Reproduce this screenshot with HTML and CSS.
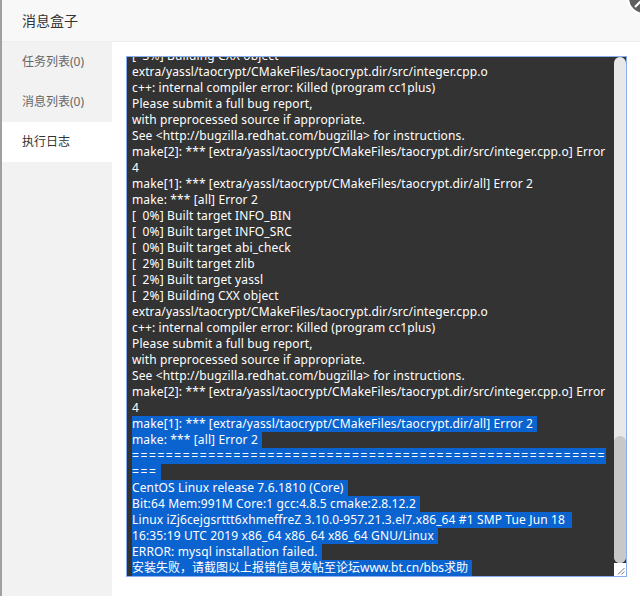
FILE: index.html
```html
<!DOCTYPE html>
<html lang="zh-CN">

<head>
    <meta charset="UTF-8">
    <meta name="viewport" content="width=device-width, initial-scale=1.0">
    <title>消息盒子</title>
    <link rel="stylesheet" href="styles.css">
</head>

<body>
    <div class="layer">
        <div class="layer-title">消息盒子</div>
        <!-- 关闭按钮（圆形，露出一角） -->
        <span class="layer-close">
            <svg viewBox="0 0 34 34" width="34" height="34">
                <circle cx="17" cy="17" r="17" fill="#fff" />
                <circle cx="17" cy="17" r="15" fill="#5f5f5f" />
                <path d="M8 8L26 26M26 8L8 26" stroke="#fff" stroke-width="2.2" />
            </svg>
        </span>
        <div class="layer-body">
            <ul class="tab-nav">
                <li>任务列表(0)</li>
                <li>消息列表(0)</li>
                <li class="on">执行日志</li>
            </ul>
            <div class="tab-con">
                <div class="logbox">
                    <!-- column-reverse: 日志默认显示最底部 -->
                    <div class="logscroll">
                        <div class="log">|-Start installing mysql-5.6 ...
--2019-06-20 10:12:04--  http://download.bt.cn/src/mysql-5.6.44.tar.gz
正在解析主机 download.bt.cn... 
正在连接 download.bt.cn:80... 已连接。
已发出 HTTP 请求，正在等待回应... 200 OK
长度：32094542 (31M) [application/octet-stream]
正在保存至: “mysql-5.6.44.tar.gz”
2019-06-20 10:12:09 (6.48 MB/s) - 已保存 “mysql-5.6.44.tar.gz”
-- Running cmake version 2.8.12.2
-- Could NOT find Git (missing:  GIT_EXECUTABLE)
-- Configuring with MAX_INDEXES = 64U
-- The C compiler identification is GNU 4.8.5
-- The CXX compiler identification is GNU 4.8.5
-- Check for working C compiler: /usr/bin/cc
-- Check for working C compiler: /usr/bin/cc -- works
-- Detecting C compiler ABI info
-- Detecting C compiler ABI info - done
-- Check for working CXX compiler: /usr/bin/c++
-- Check for working CXX compiler: /usr/bin/c++ -- works
-- Detecting CXX compiler ABI info
-- Detecting CXX compiler ABI info - done
-- CMAKE_GENERATOR: Unix Makefiles
-- SIZEOF_VOIDP 8
-- MySQL 5.6.44
-- Packaging as: mysql-5.6.44-Linux-x86_64
-- Looking for SHM_HUGETLB
-- Looking for SHM_HUGETLB - found
-- Looking for sys/types.h
-- Looking for sys/types.h - found
-- Looking for stdint.h
-- Looking for stdint.h - found
-- Looking for stddef.h
-- Looking for stddef.h - found
-- Check size of void *
-- Check size of void * - done
-- Performing Test HAVE_PEERCRED
-- Performing Test HAVE_PEERCRED - Success
-- Looking for alloca.h
-- Looking for alloca.h - found
-- Looking for arpa/inet.h
-- Looking for arpa/inet.h - found
-- Looking for crypt.h
-- Looking for crypt.h - found
-- Looking for dirent.h
-- Looking for dirent.h - found
-- Looking for fcntl.h
-- Looking for fcntl.h - found
-- Looking for pthread.h
-- Looking for pthread.h - found
-- Found Curses: /usr/lib64/libcurses.so
-- Looking for tputs in /usr/lib64/libcurses.so
-- Looking for tputs in /usr/lib64/libcurses.so - found
-- Performing Test HAVE_DECL_TGOTO
-- Performing Test HAVE_DECL_TGOTO - Success
-- Using cmake version 2.8.12.2
-- Not building NDB
-- Library mysqlclient depends on OSLIBS -lpthread;m;rt;dl
-- Googlemock was not found. gtest-based unit tests will be disabled.
-- Library mysqlserver depends on OSLIBS -lpthread;m;rt;crypt;dl
-- Configuring done
-- Generating done
-- Build files have been written to: /www/server/mysql/src
Scanning dependencies of target INFO_BIN
[  0%] Built target INFO_BIN
Scanning dependencies of target INFO_SRC
[  0%] Built target INFO_SRC
Scanning dependencies of target abi_check
[  0%] Built target abi_check
Scanning dependencies of target zlib
[  0%] Building C object zlib/CMakeFiles/zlib.dir/adler32.c.o
[  0%] Building C object zlib/CMakeFiles/zlib.dir/compress.c.o
[  1%] Building C object zlib/CMakeFiles/zlib.dir/crc32.c.o
[  1%] Building C object zlib/CMakeFiles/zlib.dir/deflate.c.o
[  1%] Building C object zlib/CMakeFiles/zlib.dir/gzio.c.o
[  1%] Building C object zlib/CMakeFiles/zlib.dir/inflate.c.o
[  1%] Building C object zlib/CMakeFiles/zlib.dir/trees.c.o
[  1%] Building C object zlib/CMakeFiles/zlib.dir/zutil.c.o
Linking C static library libzlib.a
[  2%] Built target zlib
Scanning dependencies of target yassl
[  2%] Building CXX object extra/yassl/CMakeFiles/yassl.dir/src/buffer.cpp.o
[  2%] Building CXX object extra/yassl/CMakeFiles/yassl.dir/src/ssl.cpp.o
Linking CXX static library libyassl.a
[  2%] Built target yassl
Scanning dependencies of target taocrypt
[  2%] Building CXX object extra/yassl/taocrypt/CMakeFiles/taocrypt.dir/src/aes.cpp.o
[  2%] Building CXX object extra/yassl/taocrypt/CMakeFiles/taocrypt.dir/src/arc4.cpp.o
[  2%] Building CXX object extra/yassl/taocrypt/CMakeFiles/taocrypt.dir/src/asn.cpp.o
[  2%] Building CXX object extra/yassl/taocrypt/CMakeFiles/taocrypt.dir/src/dh.cpp.o
[  3%] Building CXX object extra/yassl/taocrypt/CMakeFiles/taocrypt.dir/src/hash.cpp.o
[  3%] Building CXX object
extra/yassl/taocrypt/CMakeFiles/taocrypt.dir/src/integer.cpp.o
c++: internal compiler error: Killed (program cc1plus)
Please submit a full bug report,
with preprocessed source if appropriate.
See &lt;http://bugzilla.redhat.com/bugzilla&gt; for instructions.
make[2]: *** [extra/yassl/taocrypt/CMakeFiles/taocrypt.dir/src/integer.cpp.o] Error
4
make[1]: *** [extra/yassl/taocrypt/CMakeFiles/taocrypt.dir/all] Error 2
make: *** [all] Error 2
[  0%] Built target INFO_BIN
[  0%] Built target INFO_SRC
[  0%] Built target abi_check
[  2%] Built target zlib
[  2%] Built target yassl
[  2%] Building CXX object
extra/yassl/taocrypt/CMakeFiles/taocrypt.dir/src/integer.cpp.o
c++: internal compiler error: Killed (program cc1plus)
Please submit a full bug report,
with preprocessed source if appropriate.
See &lt;http://bugzilla.redhat.com/bugzilla&gt; for instructions.
make[2]: *** [extra/yassl/taocrypt/CMakeFiles/taocrypt.dir/src/integer.cpp.o] Error
4
<span class="sel">make[1]: *** [extra/yassl/taocrypt/CMakeFiles/taocrypt.dir/all] Error 2</span>
<span class="sel">make: *** [all] Error 2</span>
<span class="sel rule">========================================================</span>
<span class="sel rule end">===</span>
<span class="sel">CentOS Linux release 7.6.1810 (Core)</span>
<span class="sel">Bit:64 Mem:991M Core:1 gcc:4.8.5 cmake:2.8.12.2</span>
<span class="sel">Linux iZj6cejgsrttt6xhmeffreZ 3.10.0-957.21.3.el7.x86_64 #1 SMP Tue Jun 18 </span>
<span class="sel">16:35:19 UTC 2019 x86_64 x86_64 x86_64 GNU/Linux</span>
<span class="sel">ERROR: mysql installation failed.</span>
<span class="sel cn">安装失败，请截图以上报错信息发帖至论坛www.bt.cn/bbs求助</span></div>
                    </div>
                    <!-- 滚动条和右下角拖拽块 -->
                    <div class="scrollbar"><div class="thumb"></div></div>
                    <div class="resizer">
                        <svg viewBox="0 0 12 13" width="12" height="13">
                            <path d="M4 11.5L10.5 5M7.5 11.5L10.5 8.5" stroke="#777" stroke-width="1" fill="none" />
                        </svg>
                    </div>
                </div>
            </div>
        </div>
    </div>
</body>

</html>
```

FILE: styles.css
```css
body {
    margin: 0;
    background: #a0a0a0;
    overflow: hidden;
    font-family: "Noto Sans", "Noto Sans CJK SC", sans-serif;
}

.layer {
    position: relative;
    margin-left: 2px;
    width: 640px;
    height: 596px;
    background: #fff;
}

.layer-title {
    height: 41px;
    line-height: 41px;
    padding-left: 20px;
    border-bottom: 1px solid #eee;
    background: #f8f8f8;
    font-size: 14px;
    color: #333;
}

.layer-close {
    position: absolute;
    left: 625px;
    top: -19px;
    z-index: 2;
    width: 34px;
    height: 34px;
}

.layer-close svg {
    display: block;
}

.layer-body {
    display: flex;
    height: 554px;
}

.tab-nav {
    width: 110px;
    margin: 0;
    padding: 0;
    list-style: none;
    background: #f2f2f2;
}

.tab-nav li {
    height: 40px;
    line-height: 40px;
    padding-left: 20px;
    font-size: 12px;
    color: #666;
}

.tab-nav li.on {
    background: #fff;
    color: #333;
}

.tab-con {
    flex: 1;
    padding: 14px;
}

.logbox {
    position: relative;
    width: 499px;
    height: 519px;
    border: 1px solid #88aef0;
    background: #333;
}

.logscroll {
    width: 487px;
    height: 100%;
    overflow: hidden;
    display: flex;
    flex-direction: column-reverse;
}

.log {
    padding: 0 5px;
    white-space: pre;
    font-size: 12px;
    line-height: 16px;
    letter-spacing: 0.13px;
    color: #fff;
}

.log .sel {
    display: inline-block;
    height: 16px;
    padding-right: 4px;
    vertical-align: top;
    background: #0b63d0;
}

.log .rule {
    padding-right: 0;
    letter-spacing: 1.6px;
}

.log .rule.end {
    padding-right: 4px;
}

.log .cn {
    letter-spacing: 0;
}

.scrollbar {
    position: absolute;
    top: 0;
    right: 0;
    width: 12px;
    height: 506px;
    background: #e8e8e8;
    border-radius: 6px;
}

.thumb {
    position: absolute;
    left: 0;
    bottom: 0;
    width: 12px;
    height: 127px;
    background: #c8c8c8;
    border-radius: 6px;
}

.resizer {
    position: absolute;
    right: 0;
    bottom: 0;
    width: 12px;
    height: 13px;
    background: #fff;
}

.resizer svg {
    display: block;
}
```
